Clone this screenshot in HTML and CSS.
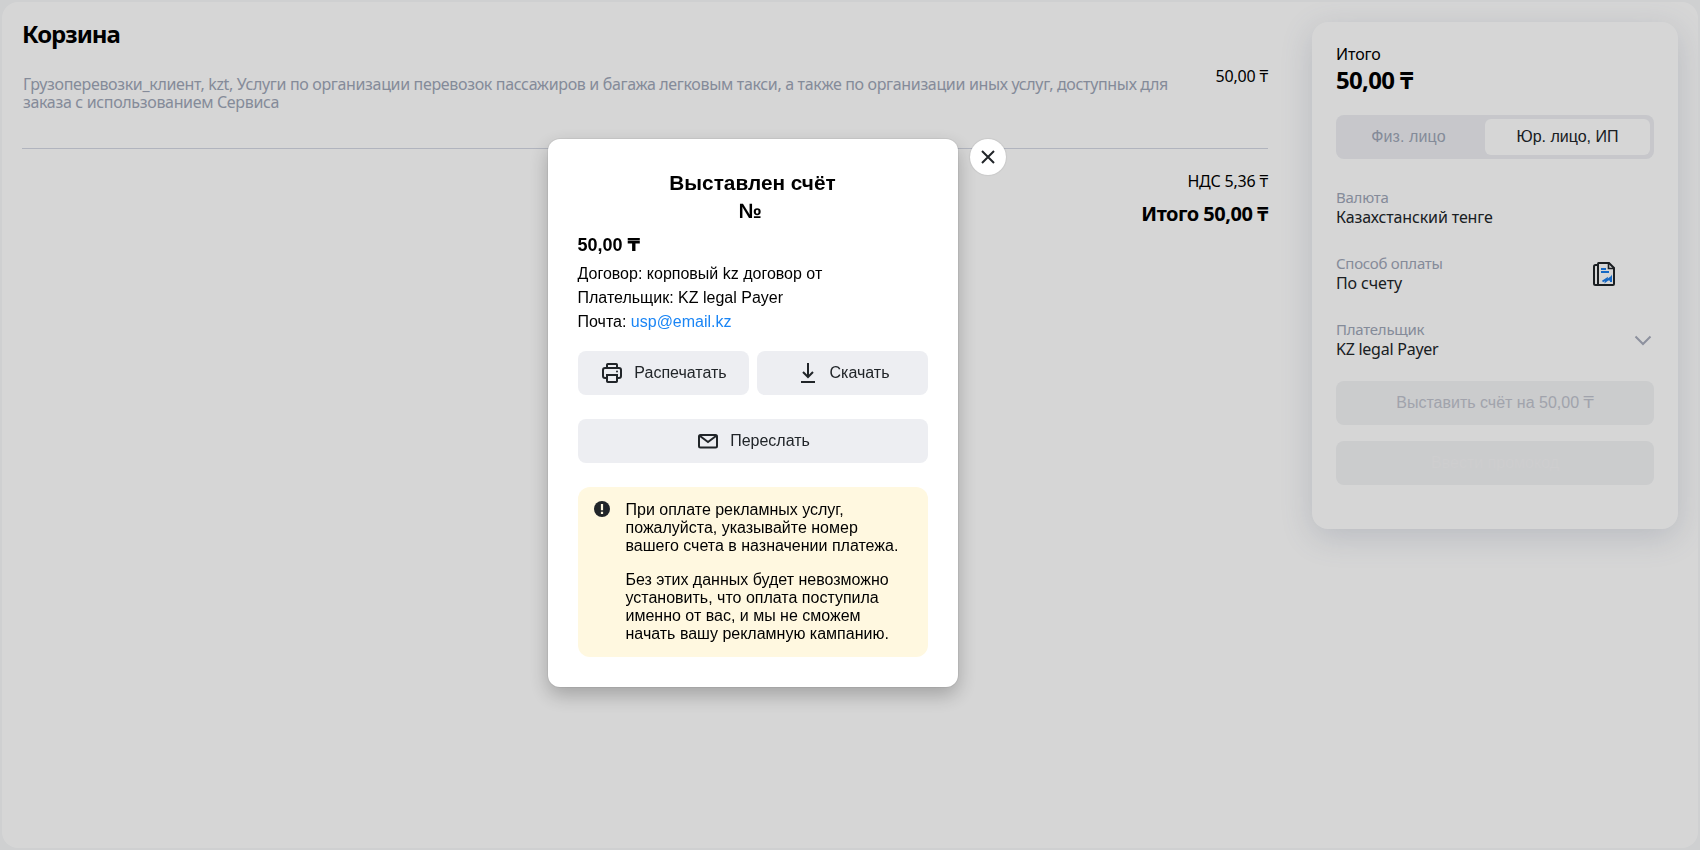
FILE: index.html
```html
<!DOCTYPE html>
<html lang="ru">
<head>
<meta charset="utf-8">
<title>Корзина</title>
<link rel="stylesheet" href="styles.css">
</head>
<body>
<div class="page">
  <main class="basket">
    <h1 class="basket-title">Корзина</h1>
    <div class="order">
      <p class="order-name">Грузоперевозки_клиент, kzt, Услуги по организации перевозок пассажиров и багажа легковым такси, а также по организации иных услуг, доступных для<br>заказа с использованием Сервиса</p>
      <span class="order-price">50,00 ₸</span>
    </div>
    <div class="vat">НДС 5,36 ₸</div>
    <div class="sum">Итого 50,00 ₸</div>
  </main>
  <aside class="card">
    <div class="card-label">Итого</div>
    <div class="card-total">50,00 ₸</div>
    <div class="tabs">
      <button class="tab">Физ. лицо</button>
      <button class="tab tab-active">Юр. лицо, ИП</button>
    </div>
    <div class="field">
      <div>
        <div class="field-label">Валюта</div>
        <div class="field-value">Казахстанский тенге</div>
      </div>
    </div>
    <div class="field">
      <div>
        <div class="field-label">Способ оплаты</div>
        <div class="field-value">По счету</div>
      </div>
      <svg class="doc-icon" width="24" height="26" viewBox="0 0 24 26" fill="none">
        <path d="M6.500 2H17l5 5v16q0 1-1 1H6.500q-.5 0-.5-.5V3q0-1 .5-1zM6 4H3.500Q2 4 2 5.500V22.500q0 1.500 1.500 1.500H6" stroke="#212529" stroke-width="2"/>
        <path d="M16.500 2v5.500H22" stroke="#212529" stroke-width="1.600"/>
        <path d="M9 8h5M9 11h8" stroke="#1a7cea" stroke-width="2"/>
        <path d="M10.500 20.500l4-2.500-.5 2 4-3-.5 2.500 1.500-2.500v4" stroke="#1a7cea" stroke-width="2"/>
      </svg>
    </div>
    <div class="field">
      <div>
        <div class="field-label">Плательщик</div>
        <div class="field-value value-payer">KZ legal Payer</div>
      </div>
      <svg class="chevron" width="18" height="11" viewBox="0 0 18 11" fill="none"><path d="M1.500 1.500L9 9l7.500-7.500" stroke="#a8adbd" stroke-width="2"/></svg>
    </div>
    <button class="submit">Выставить счёт на 50,00 <span class="tenge">₸</span></button>
    <button class="submit promo">Ввести промокод</button>
  </aside>
</div>
<div class="overlay">
  <div class="modal">
    <button class="close" aria-label="Закрыть"><svg width="14" height="14" viewBox="0 0 14 14"><path d="M1 1l12 12M13 1L1 13" stroke="#212529" stroke-width="2"/></svg></button>
    <h2 class="modal-title">Выставлен счёт<br><span class="number">№</span></h2>
    <div class="modal-sum">50,00 <span class="tenge">₸</span></div>
    <div class="details">
      <div>Договор: корповый kz договор от</div>
      <div>Плательщик: KZ legal Payer</div>
      <div>Почта: <a class="mail">usp@email.kz</a></div>
    </div>
    <div class="actions">
      <button class="action">
        <svg width="24" height="24" viewBox="0 0 24 24" fill="none" stroke="#212529" stroke-width="2"><path d="M7 7V3.800q0-.8.8-.8h8.400q.8 0 .8.800V7M7 17H5q-2 0-2-2V9q0-2 2-2h14q2 0 2 2v6q0 2-2 2h-2"/><path d="M7 14h10v6.200q0 .8-.8.800H7.800q-.8 0-.8-.8z"/><circle cx="17" cy="10.500" r="1" fill="#212529" stroke="none"/></svg>
        <span>Распечатать</span>
      </button>
      <button class="action">
        <svg width="24" height="24" viewBox="0 0 24 24" fill="none" stroke="#212529" stroke-width="2"><path d="M12 2v14M7 11l5 5 5-5M5 21h14"/></svg>
        <span>Скачать</span>
      </button>
      <button class="action action-wide">
        <svg width="24" height="24" viewBox="0 0 24 24" fill="none" stroke="#212529" stroke-width="2"><rect x="3" y="6" width="18" height="12.500" rx="1.500"/><path d="M4 7l8 6 8-6"/></svg>
        <span>Переслать</span>
      </button>
    </div>
    <div class="notice">
      <svg class="notice-icon" width="16" height="16" viewBox="0 0 16 16"><circle cx="8" cy="8" r="8" fill="#212529"/><path d="M6.900 3h2.200v6.200H6.900zM6.900 10.800h2.200V13H6.900z" fill="#fff8e0"/></svg>
      <div class="notice-text">
        <p>При оплате рекламных услуг,<br>пожалуйста, указывайте номер<br>вашего счета в назначении платежа.</p>
        <p>Без этих данных будет невозможно<br>установить, что оплата поступила<br>именно от вас, и мы не сможем<br>начать вашу рекламную кампанию.</p>
      </div>
    </div>
  </div>
</div>
</body>
</html>
```
FILE: styles.css
```css
* { box-sizing: border-box; }
body {
  margin: 0;
  height: 850px;
  padding: 2px;
  overflow: hidden;
  background: #f7f8fa;
  font: 16px/18px "Noto Sans", sans-serif;
  color: #000;
}
h1, h2, p { margin: 0; font-weight: 700; }
p { font-weight: 400; }
button {
  border: 0;
  padding: 0;
  font: 16px/18px "Liberation Sans", Arial, sans-serif;
}
.page {
  display: flex;
  align-items: flex-start;
  gap: 44px;
  height: 846px;
  padding: 20px;
  border-radius: 16px;
  background: #fff;
  overflow: hidden;
}
.basket { width: 1246px; }
.basket-title {
  height: 24px;
  font-size: 24px;
  line-height: 24px;
  letter-spacing: -1px;
}
.order {
  display: flex;
  justify-content: space-between;
  height: 103px;
  padding-top: 29px;
  border-bottom: 1px solid #d3d7e3;
}
.order-name {
  padding-left: 1px;
  white-space: nowrap;
  letter-spacing: -0.338px;
  color: #9ea6b7;
}
.order-price { white-space: nowrap; margin-top: -8px; letter-spacing: -0.2px; }
.vat { margin-top: 23px; text-align: right; letter-spacing: -0.2px; }
.sum {
  margin-top: 13px;
  text-align: right;
  font-size: 20px;
  line-height: 22px;
  font-weight: 700;
  letter-spacing: -0.5px;
}
.card {
  width: 366px;
  height: 507px;
  padding: 24px;
  border-radius: 16px;
  background: #fff;
  box-shadow: 0 8px 32px rgba(80, 95, 130, 0.2);
}
.card-label { line-height: 16px; letter-spacing: -0.1px; }
.card-total {
  height: 26px;
  margin-top: 4px;
  font-size: 24px;
  line-height: 28px;
  font-weight: 700;
  letter-spacing: -0.7px;
}
.tabs {
  display: flex;
  gap: 8px;
  height: 44px;
  margin-top: 23px;
  padding: 4px;
  border-radius: 8px;
  background: #edeef2;
}
.tab {
  width: 137px;
  border-radius: 6px;
  background: none;
  letter-spacing: 0.1px;
  color: #9ea6b7;
}
.tab-active { width: 165px; background: #fff; letter-spacing: 0; color: #212529; }
.field {
  display: flex;
  justify-content: space-between;
  height: 38px;
  margin-top: 28px;
}
.field-label { height: 20px; font-size: 15px; line-height: 18px; letter-spacing: -0.25px; color: #9ea6b7; }
.field-value { line-height: 18px; letter-spacing: -0.12px; color: #212529; }
.value-payer { letter-spacing: -0.25px; }
.tabs + .field { margin-top: 29px; }
.doc-icon { margin: 7px 38px 0 0; }
.chevron { margin: 15px 2px 0 0; }
.submit {
  display: block;
  width: 318px;
  height: 44px;
  margin-top: 23px;
  border-radius: 8px;
  background: #f2f3f5;
  color: #c0c3cd;
}
.promo { margin-top: 16px; color: #f6f6f7; }
.tenge { font-family: "DejaVu Sans", sans-serif; line-height: 1; }
.overlay {
  position: fixed;
  inset: 0;
  display: flex;
  justify-content: center;
  align-items: flex-start;
  padding: 139px 195px 0 0;
  background: rgba(0, 0, 0, 0.16);
}
.modal {
  position: relative;
  width: 410px;
  height: 548px;
  padding: 30px;
  border-radius: 12px;
  background: #fff;
  box-shadow: 0 8px 20px rgba(0, 0, 0, 0.25), 0 0 0 1px rgba(0, 0, 0, 0.05);
  font-family: "Liberation Sans", Arial, sans-serif;
}
.close {
  position: absolute;
  top: 0;
  right: -48px;
  display: flex;
  align-items: center;
  justify-content: center;
  width: 36px;
  height: 36px;
  border-radius: 50%;
  background: #fff;
  box-shadow: 0 0 2px rgba(0, 0, 0, 0.2);
}
.modal-title { font-size: 20.8px; line-height: 28px; text-align: center; }
.number { padding-right: 5px; }
.modal-sum { height: 20px; margin-top: 10px; font-size: 18px; line-height: 20px; font-weight: 700; }
.details { margin-top: 7px; line-height: 24px; }
.mail { color: #1a85f5; }
.actions {
  display: grid;
  grid-template-columns: 1fr 1fr;
  gap: 24px 8px;
  margin-top: 17px;
}
.action {
  display: flex;
  align-items: center;
  justify-content: center;
  gap: 10px;
  height: 44px;
  padding-left: 1px;
  border-radius: 8px;
  background: #edeef2;
  color: #212529;
}
.action-wide { grid-column: 1 / 3; }
.notice {
  display: flex;
  gap: 16px;
  height: 170px;
  margin-top: 24px;
  padding: 14px 16px;
  border-radius: 12px;
  background: #fff8e0;
}
.notice-text p + p { margin-top: 16px; }
```
